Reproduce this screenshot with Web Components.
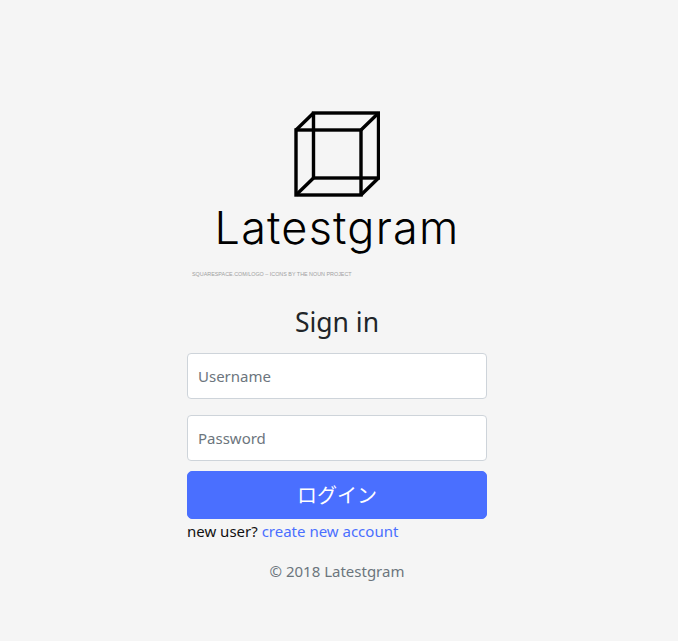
<!DOCTYPE html>
<html lang="ja">
<head>
<meta charset="utf-8">
<title>Latestgram</title>
<style>
    html, body { margin: 0; height: 100%; }
    body {
        background: #f5f5f5;
        color: #212529;
        font: 15px/1.5 "Noto Sans", "Noto Sans CJK JP", sans-serif;
    }
</style>
</head>
<body>
<signin-page>
    <brand-logo></brand-logo>
    <signin-form></signin-form>
    <span slot="footer">© 2018 Latestgram</span>
</signin-page>

<script>
class SigninPage extends HTMLElement {
    constructor() {
        super();
        this.attachShadow({ mode: "open" });
        this.shadowRoot.innerHTML = `
            <style>
                :host {
                    display: flex;
                    flex-direction: column;
                    align-items: center;
                    box-sizing: border-box;
                    min-height: 641px;
                    padding: 111px 4px 0 0;
                }
                .inner { width: 300px; display: flex; flex-direction: column; }
                footer {
                    margin-top: 16px;
                    text-align: center;
                    color: #6c757d;
                    line-height: 24px;
                }
            </style>
            <div class="inner">
                <slot></slot>
                <footer><slot name="footer"></slot></footer>
            </div>
        `;
    }
}

class BrandLogo extends HTMLElement {
    constructor() {
        super();
        this.attachShadow({ mode: "open" });
        this.shadowRoot.innerHTML = `
            <style>
                :host { display: flex; flex-direction: column; align-items: center; }
                svg { display: block; margin-right: 1px; }
                .name {
                    font: 300 45px/56px Inter, "Noto Sans", sans-serif;
                    color: #000;
                    margin-top: 3px;
                    letter-spacing: 1.2px;
                }
                .credit {
                    align-self: flex-start;
                    margin: 14px 0 0 5px;
                    font: 5.4px/8px "Liberation Sans", sans-serif;
                    color: #a0a0a0;
                    white-space: nowrap;
                }
            </style>
            <svg width="86" height="86" viewBox="0 0 86 86" fill="none" stroke="#000" stroke-width="3.4" stroke-linejoin="miter">
                <rect x="2" y="19" width="65" height="65"/>
                <rect x="19.5" y="2" width="65" height="65"/>
                <path d="M2 19 19.5 2M67 19 84.5 2M67 84 84.5 67M2 84 19.5 67"/>
            </svg>
            <div class="name">Latestgram</div>
            <div class="credit">SQUARESPACE.COM/LOGO – ICONS BY THE NOUN PROJECT</div>
        `;
    }
}

class SigninForm extends HTMLElement {
    constructor() {
        super();
        this.attachShadow({ mode: "open" });
        this.shadowRoot.innerHTML = `
            <style>
                :host { display: block; margin-top: 27px; }
                h1 {
                    margin: 0 0 14px;
                    font-size: 26.5px;
                    font-weight: 400;
                    line-height: 34px;
                    text-align: center;
                    color: #212529;
                }
                form { display: flex; flex-direction: column; margin: 0; }
                input {
                    box-sizing: border-box;
                    width: 100%;
                    height: 46px;
                    margin-bottom: 16px;
                    padding: 10px;
                    font: inherit;
                    color: #495057;
                    background: #fff;
                    border: 1px solid #ced4da;
                    border-radius: 4px;
                    outline: none;
                }
                input:last-of-type { margin-bottom: 10px; }
                input::placeholder { color: #6c757d; opacity: 1; }
                button {
                    height: 48px;
                    padding: 0;
                    font: 20px/1.5 "Noto Sans CJK JP", "Noto Sans", sans-serif;
                    color: #fff;
                    background: #4a6fff;
                    border: 1px solid #4a6fff;
                    border-radius: 5px;
                    cursor: pointer;
                }
                p { margin: 0; line-height: 24px; color: #111; }
                a { color: #4a6fff; text-decoration: none; }
            </style>
            <h1>Sign in</h1>
            <form>
                <input type="text" placeholder="Username">
                <input type="password" placeholder="Password">
                <button type="button">ログイン</button>
            </form>
            <p>new user? <a href="#">create new account</a></p>
        `;
    }
}

customElements.define("signin-page", SigninPage);
customElements.define("brand-logo", BrandLogo);
customElements.define("signin-form", SigninForm);
</script>
</body>
</html>
